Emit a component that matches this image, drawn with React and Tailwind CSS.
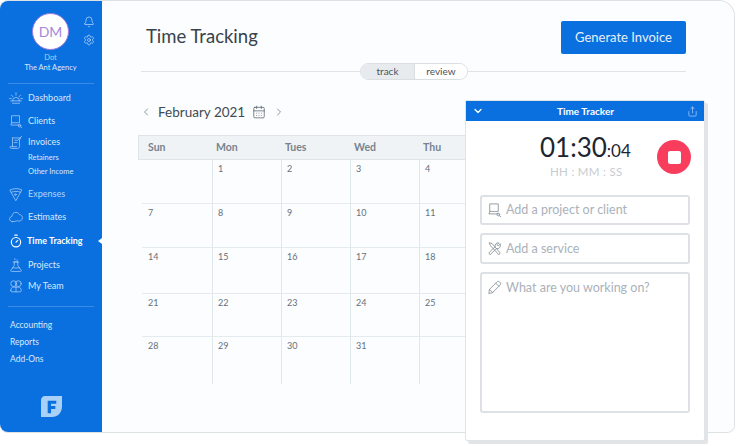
import { Bell, Settings, Timer, ChevronLeft, ChevronRight, ChevronDown, CalendarDays, Share } from "lucide-react";

const Ico = ({ children, className }) => (
  <svg viewBox="0 0 24 24" fill="none" stroke="currentColor" strokeWidth="1.3" strokeLinecap="round" strokeLinejoin="round" className={className}>
    {children}
  </svg>
);

const DashIcon = (p) => (
  <Ico {...p}>
    <path d="M6 17a6 6 0 0 1 12 0" />
    <path d="M3 17h18M6 21h12M12 3v4M4 7l3 3M20 7l-3 3M1 13h3M20 13h3" />
  </Ico>
);
const ClientIcon = (p) => (
  <Ico {...p}>
    <path d="M5 3h13v12H5zM5 15l-2 4h15" />
    <circle cx="18" cy="20" r="2.200" />
    <path d="M20 22l2 1.500" />
  </Ico>
);
const InvoiceIcon = (p) => (
  <Ico {...p}>
    <path d="M6 5h14l-2 3v12c0 2-2 3-3 3H4c-2 0-3-2-2-3h11" />
    <path d="M6 5v15M10 9h5M9 13h5M22 2l-6 6" />
  </Ico>
);
const ExpenseIcon = (p) => (
  <Ico {...p}>
    <path d="M2 5c6-3 14-3 20 0L12 23z" />
    <path d="M4 9c5-2 11-2 16 0" />
    <circle cx="11" cy="13" r="1.500" />
  </Ico>
);
const EstimateIcon = (p) => (
  <Ico {...p}>
    <path d="M6 20c-3 0-5-2-5-5 0-2 2-4 4-4 0-4 3-7 7-7 3 0 5 2 6 4 3 0 5 3 5 5 0 4-3 6-6 6-2 0-3-1-5 0-2 1-4 1-6 1z" />
  </Ico>
);
const FlaskIcon = (p) => (
  <Ico {...p}>
    <path d="M9 7v6L3 21c-.500 1 0 2 1 2h16c1 0 1.500-1 1-2l-6-8V7z" />
    <path d="M7 7h10M6 17h12M10 1v2M14 3v1" />
  </Ico>
);
const TeamIcon = (p) => (
  <Ico {...p}>
    <circle cx="8" cy="8" r="5" />
    <circle cx="16" cy="8" r="5" />
    <path d="M3 20c0-4 2-6 5-6h8c3 0 5 2 5 6 0 1-1 2-2 2H5c-1 0-2-1-2-2z" />
    <path d="M12 14v8" />
  </Ico>
);
const ServiceIcon = (p) => (
  <Ico {...p}>
    <path d="M4 3l4 1 13 15-2 3L6 8z" />
    <path d="M21 5l-3 3-2-2 3-3a5 5 0 0 0-6 6L3 19l2 3 10-10a5 5 0 0 0 6-7z" />
  </Ico>
);
const PencilIcon = (p) => (
  <Ico {...p}>
    <path d="M3 21l1-6L16 3c1-1 3-1 4 0l1 1c1 1 1 3 0 4L9 20z" />
    <path d="M14 5l5 5M4 15l5 5" />
  </Ico>
);

const LogoIcon = () => (
  <svg viewBox="0 0 22 22" className="w-[21px] h-[21px]">
    <path d="M4 0h18v11c0 6-4 11-11 11H0V4c0-2 2-4 4-4z" fill="#a9d0f7" />
    <path d="M7 5h9v3h-5.500v2.500H15v3h-4.500V18H7z" fill="#0a6fdf" />
  </svg>
);

const NavRow = ({ icon: Icon, label, className, active }) => (
  <div className={`relative flex items-center h-[16px] pl-[9px] text-[9px] ${className} ${active ? "font-bold text-white" : "text-[#d9e9fb]"}`}>
    <Icon className={`w-[14px] h-[14px] shrink-0 ${active ? "text-white" : "text-[#a9cdf6]"}`} />
    <span className={active ? "ml-[4px]" : "ml-[5px]"}>{label}</span>
    {active && <span className="absolute right-0 top-[5px] w-0 h-0 border-y-[3px] border-y-transparent border-r-[4px] border-r-white" />}
  </div>
);

const Sidebar = () => (
  <aside className="w-[102px] shrink-0 bg-[#0a6fdf] rounded-l-[8px] flex flex-col text-white">
    <div className="relative flex flex-col items-center pt-[12px] pr-[1px]">
      <div className="w-[37px] h-[37px] rounded-full bg-white border border-[#9c7ae0] flex items-center justify-center text-[14px] text-[#a488dc]">DM</div>
      <div className="mt-[3px] text-[7.5px] leading-[10px] text-[#a9d0f7]">Dot</div>
      <div className="text-[7.5px] leading-[10px] text-[#d9e9fb]">The Ant Agency</div>
      <Bell className="absolute left-[83px] top-[15px] w-[12px] h-[12px] text-[#cfe3fa]" strokeWidth={1.3} />
      <Settings className="absolute left-[83px] top-[33px] w-[12px] h-[12px] text-[#cfe3fa]" strokeWidth={1.3} />
    </div>
    <div className="mx-[8px] mt-[10px] h-px bg-[#3a8be6]" />
    <NavRow icon={DashIcon} label="Dashboard" className="mt-[6px]" />
    <NavRow icon={ClientIcon} label="Clients" className="mt-[7px]" />
    <NavRow icon={InvoiceIcon} label="Invoices" className="mt-[5px]" />
    <div className="pl-[28px] mt-[1px] text-[7.5px] leading-[14px] text-[#d9e9fb]">
      <div>Retainers</div>
      <div>Other Income</div>
    </div>
    <NavRow icon={ExpenseIcon} label="Expenses" className="mt-[7px] !text-[#b5d5f8]" />
    <NavRow icon={EstimateIcon} label="Estimates" className="mt-[7px]" />
    <NavRow icon={Timer} label="Time Tracking" className="mt-[8px]" active />
    <NavRow icon={FlaskIcon} label="Projects" className="mt-[8px]" />
    <NavRow icon={TeamIcon} label="My Team" className="mt-[5px]" />
    <div className="mx-[8px] mt-[12px] h-px bg-[#3a8be6]" />
    <div className="pl-[10px] mt-[10px] text-[8.5px] leading-[17px] text-[#d9e9fb]">
      <div>Accounting</div>
      <div>Reports</div>
      <div>Add-Ons</div>
    </div>
    <div className="mt-[28px] flex justify-center">
      <LogoIcon />
    </div>
  </aside>
);

// Fri and Sat sit under the tracker panel, so they stay empty
const weeks = [
  ["", "1", "2", "3", "4", "", ""],
  ["7", "8", "9", "10", "11", "", ""],
  ["14", "15", "16", "17", "18", "", ""],
  ["21", "22", "23", "24", "25", "", ""],
  ["28", "29", "30", "31", "", "", ""],
];
const days = ["Sun", "Mon", "Tues", "Wed", "Thu", "", ""];
const rowHeights = ["h-[44px]", "h-[44px]", "h-[46px]", "h-[43px]", "h-[47px]"];

const Calendar = () => (
  <div className="mt-[12px] ml-[36px] w-[500px]">
    <div className="grid grid-cols-[74px_69px_69px_69px_69px_75px_75px] h-[25px] items-center bg-[#f0f3f5] border border-[#dfe4e8] text-[10.5px] font-bold text-[#76838f]">
      {days.map((d, i) => (
        <div key={i} className={i === 0 ? "pl-[9px]" : "pl-[3px]"}>{d}</div>
      ))}
    </div>
    {weeks.map((week, r) => (
      <div key={r} className={`ml-[4px] grid grid-cols-[70px_69px_69px_69px_69px_75px_75px] border-b border-[#e3ebee] ${rowHeights[r]} ${r === 4 ? "border-b-0" : ""}`}>
        {week.map((n, c) => (
          <div key={c} className={`pt-[3px] text-[9px] leading-[12px] text-[#66707a] ${c > 0 ? "border-l border-[#e0e8ea] pl-[5px]" : "pl-[6px]"}`}>{n}</div>
        ))}
      </div>
    ))}
  </div>
);

const Field = ({ icon: Icon, text, className }) => (
  <div className={`border-2 border-[#dde1e5] rounded-[3px] flex items-start pl-[5px] text-[12.5px] text-[#aab2ba] ${className}`}>
    <Icon className="w-[15px] h-[15px] shrink-0 mr-[4px] text-[#7f8b95]" />
    <span className="leading-[15px]">{text}</span>
  </div>
);

const Tracker = () => (
  <div className="absolute left-[465px] top-[100px] w-[240px] h-[341px] bg-white border border-[#e0e4e7] rounded-[2px] shadow-[3px_3px_0_#e1e5e8] flex flex-col">
    <div className="h-[20px] bg-[#0a6fdf] flex items-center justify-between px-[6px] text-white text-[10px] font-bold">
      <ChevronDown className="w-[12px] h-[12px]" strokeWidth={2.5} />
      <span>Time Tracker</span>
      <Share className="w-[11px] h-[11px] text-[#b5d5f8]" strokeWidth={1.5} />
    </div>
    <div className="relative h-[74px]">
      <div className="pl-[74px] pt-[14px] text-[#1d2630] leading-[24px]">
        <span className="text-[26px]">01:30</span>
        <span className="text-[17px]">:04</span>
      </div>
      <div className="pl-[84px] mt-[2px] text-[11.5px] leading-[14px] text-[#c6ccd2] tracking-[0.3px]">HH : MM : SS</div>
      <button className="absolute left-[191px] top-[19px] w-[34px] h-[34px] rounded-full bg-[#f83d5d] flex items-center justify-center">
        <span className="block w-[13px] h-[13px] rounded-[2px] bg-white" />
      </button>
    </div>
    <div className="px-[14px] flex flex-col gap-[8px]">
      <Field icon={ClientIcon} text="Add a project or client" className="h-[30px] pt-[5px]" />
      <Field icon={ServiceIcon} text="Add a service" className="h-[31px] pt-[6px]" />
      <Field icon={PencilIcon} text="What are you working on?" className="h-[141px] pt-[6px]" />
    </div>
  </div>
);

export default function App() {
  return (
    <div className="relative w-[736px] h-[446px] bg-white overflow-hidden font-['Lato',sans-serif]">
      <div className="flex w-[735px] h-[433px] rounded-l-[8px] rounded-tr-[16px] rounded-br-[8px] border-r border-b border-t border-[#dde2e5]">
        <Sidebar />
        <main className="flex-1 min-w-0 bg-[#fbfdfe] rounded-tr-[16px] rounded-br-[8px] overflow-hidden">
          <div className="flex items-start justify-between pl-[44px] pr-[48px] pt-[20px]">
            <h1 className="mt-[1px] text-[18.5px] leading-[29px] text-[#38424b]">Time Tracking</h1>
            <button className="w-[125px] h-[33px] rounded-[2px] bg-[#0a6fdf] text-[13px] text-[#e6f0fc]">Generate Invoice</button>
          </div>
          <div className="mt-[9px] ml-[39px] mr-[48px] flex items-center">
            <div className="w-[219px] h-px bg-[#dfe4e7]" />
            <div className="flex h-[17px] w-[108px] rounded-full border border-[#d9dee2] overflow-hidden text-[10px] text-[#47535d]">
              <div className="w-[54px] bg-[#e8ebee] border-r border-[#d9dee2] flex items-center justify-center">track</div>
              <div className="flex-1 bg-white flex items-center justify-center">review</div>
            </div>
            <div className="flex-1 h-px bg-[#dfe4e7]" />
          </div>
          <div className="mt-[22px] ml-[38px] flex items-center h-[20px] text-[#3f4a53]">
            <ChevronLeft className="w-[12px] h-[12px] text-[#8b959e]" />
            <span className="ml-[6px] text-[13.5px]">February 2021</span>
            <CalendarDays className="ml-[7px] w-[14px] h-[14px] text-[#56616b]" strokeWidth={1.3} />
            <ChevronRight className="ml-[7px] w-[12px] h-[12px] text-[#8b959e]" />
          </div>
          <div className="h-px" />
          <Calendar />
        </main>
      </div>
      <Tracker />
    </div>
  );
}
